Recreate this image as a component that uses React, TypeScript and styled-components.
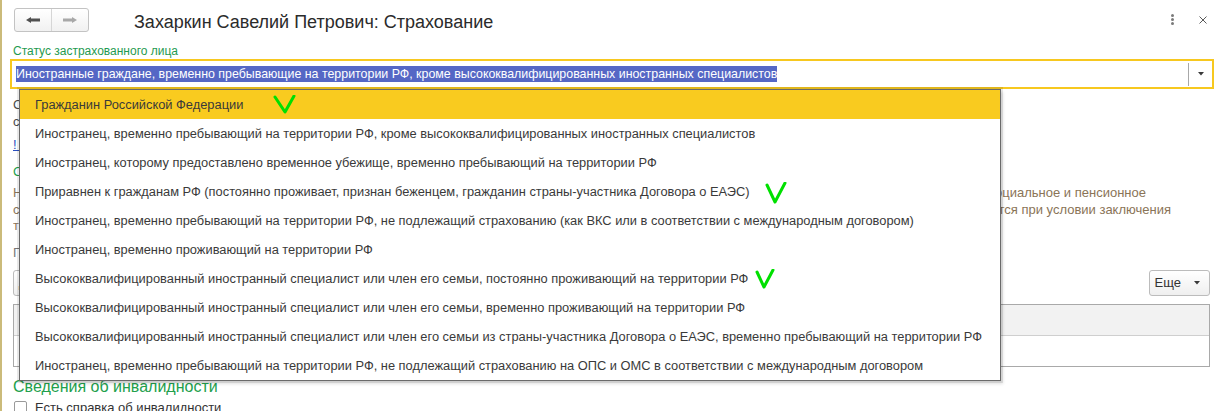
import React from 'react';
import styled, { createGlobalStyle } from 'styled-components';

const GlobalStyle = createGlobalStyle`
    html, body {
        margin: 0;
        padding: 0;
        background: #ffffff;
    }
    body {
        font-family: "Liberation Sans", Arial, sans-serif;
        font-size: 13px;
        color: #333333;
    }
`;

const Window = styled.div`
    position: relative;
    width: 1218px;
    height: 411px;
    overflow: hidden;
    box-sizing: border-box;
    border-left: 2px solid #cbbb7a;
    padding: 0 4px 0 8px;
`;

const Header = styled.div`
    display: flex;
    align-items: flex-start;
    height: 44px;
    padding-top: 8px;
    box-sizing: border-box;
`;

const NavGroup = styled.div`
    display: flex;
    margin-left: 4px;
    height: 24px;
    border: 1px solid #c3c3c3;
    border-radius: 3px;
    box-sizing: border-box;
    background: linear-gradient(#ffffff, #f1f1f1);
`;

const NavButton = styled.div<{ $first?: boolean }>`
    width: 36px;
    display: flex;
    align-items: center;
    justify-content: center;
    border-left: ${p => (p.$first ? 'none' : '1px solid #d6d6d6')};
`;

const Title = styled.div`
    margin-left: 45px;
    padding-top: 2px;
    font-size: 18px;
    line-height: 24px;
    color: #2b2b2b;
    flex: 1;
`;

const Kebab = styled.div`
    display: flex;
    flex-direction: column;
    gap: 1px;
    margin-top: 6px;
    span {
        width: 3px;
        height: 3px;
        border-radius: 50%;
        background: #7a7a7a;
    }
`;

const CloseBtn = styled.div`
    margin: 8px 7px 0 25px;
    display: flex;
`;

const FieldLabel = styled.div`
    margin-left: 3px;
    font-size: 12px;
    line-height: 15px;
    color: #1f9a50;
`;

const Field = styled.div`
    position: relative;
    height: 30px;
    border: 2px solid #f7c81f;
    box-sizing: border-box;
    display: flex;
    align-items: center;
    padding-left: 4px;
`;

const Selected = styled.span`
    background: #5567c5;
    color: #ffffff;
    font-size: 12.4px;
    line-height: 16px;
    white-space: nowrap;
`;

const FieldButton = styled.div`
    margin-left: auto;
    width: 23px;
    height: 23px;
    border-left: 1px solid #a8a8a8;
    display: flex;
    align-items: center;
    justify-content: center;
`;

const DropList = styled.div`
    position: absolute;
    left: 7px;
    top: 28px;
    z-index: 5;
    width: 982px;
    background: #ffffff;
    border: 1px solid #6a6a6a;
    box-sizing: border-box;
    box-shadow: 0 0 0 2px rgba(0, 0, 0, 0.09), 2px 3px 3px rgba(0, 0, 0, 0.12);
`;

const DropItem = styled.div<{ $active?: boolean }>`
    height: 29px;
    display: flex;
    align-items: center;
    padding-left: 15px;
    font-size: 12.85px;
    white-space: nowrap;
    color: #3a3a3a;
    background: ${p => (p.$active ? '#f9cb1f' : 'transparent')};
`;

const Mark = styled.svg<{ $gap: number; $shift: number }>`
    margin-left: ${p => p.$gap}px;
    margin-top: ${p => p.$shift}px;
    flex-shrink: 0;
`;

const Body = styled.div`
    padding-left: 3px;
    padding-top: 7px;
`;

const Note = styled.div`
    line-height: 17px;
    color: #4a4a4a;
    white-space: nowrap;
`;

const HelpLink = styled.a`
    display: inline-block;
    margin-top: 6px;
    line-height: 17px;
    color: #2a4fbf;
    text-decoration: underline;
`;

const Group = styled.div<{ $size: number }>`
    margin-top: 10px;
    font-size: ${p => p.$size}px;
    line-height: ${p => p.$size + 4}px;
    color: #22a04c;
    white-space: nowrap;
`;

const Explain = styled.div`
    margin-top: 5px;
    line-height: 16.5px;
    color: #8a7457;
`;

const ExplainLine = styled.div<{ $width: number }>`
    display: flex;
    width: ${p => p.$width}px;
    white-space: nowrap;
    span:first-child {
        flex: 1;
        min-width: 0;
        overflow: hidden;
    }
    span:last-child {
        flex-shrink: 0;
    }
`;

const PeriodLabel = styled.div`
    margin-top: 9px;
    line-height: 17px;
    color: #777777;
`;

const CommandBar = styled.div`
    margin-top: 9px;
    display: flex;
    justify-content: space-between;
    padding-right: 4px;
`;

const Button = styled.div`
    height: 26px;
    display: flex;
    align-items: center;
    gap: 13px;
    padding: 0 9px 0 5px;
    border: 1px solid #bcbcbc;
    border-radius: 3px;
    box-sizing: border-box;
    background: linear-gradient(#ffffff, #efefef);
    color: #333333;
`;

const Table = styled.div`
    margin: 8px 4px 0 0;
    border: 1px solid #a9a9a9;
`;

const TableHead = styled.div`
    height: 30px;
    background: #f2f2f2;
    border-bottom: 1px solid #cfcfcf;
`;

const TableRow = styled.div`
    height: 30px;
`;

const CheckRow = styled.label`
    margin-top: 2px;
    display: flex;
    align-items: center;
    gap: 8px;
    line-height: 17px;
    color: #333333;
`;

const Box = styled.span`
    width: 13px;
    height: 13px;
    margin-left: 1px;
    border: 1px solid #9a9a9a;
    border-radius: 2px;
    box-sizing: border-box;
    background: #ffffff;
`;

const Arrow: React.FC<{ dir: 'left' | 'right'; color: string }> = ({ dir, color }) => (
    <svg width="14" height="6" viewBox="0 0 14 6" style={{ transform: dir === 'right' ? 'scaleX(-1)' : undefined }}>
        <path d="M0 3 L5 0 L5 1.5 L14 1.5 L14 4.5 L5 4.5 L5 6 Z" fill={color} />
    </svg>
);

const Caret = () => (
    <svg width="6" height="4" viewBox="0 0 6 4">
        <path d="M0 0 L6 0 L3 3.5 Z" fill="#3a3a3a" />
    </svg>
);

const options = [
    'Гражданин Российской Федерации',
    'Иностранец, временно пребывающий на территории РФ, кроме высококвалифицированных иностранных специалистов',
    'Иностранец, которому предоставлено временное убежище, временно пребывающий на территории РФ',
    'Приравнен к гражданам РФ (постоянно проживает, признан беженцем, гражданин страны-участника Договора о ЕАЭС)',
    'Иностранец, временно пребывающий на территории РФ, не подлежащий страхованию (как ВКС или в соответствии с международным договором)',
    'Иностранец, временно проживающий на территории РФ',
    'Высококвалифицированный иностранный специалист или член его семьи, постоянно проживающий на территории РФ',
    'Высококвалифицированный иностранный специалист или член его семьи, временно проживающий на территории РФ',
    'Высококвалифицированный иностранный специалист или член его семьи из страны-участника Договора о ЕАЭС, временно пребывающий на территории РФ',
    'Иностранец, временно пребывающий на территории РФ, не подлежащий страхованию на ОПС и ОМС в соответствии с международным договором',
];

// отметки галочкой: индекс пункта -> размеры и отступ
const marks: Record<number, { w: number; h: number; d: string; gap: number; shift: number }> = {
    0: { w: 23, h: 19, d: 'M2 2 L12 17 L21 1', gap: 30, shift: 0 },
    3: { w: 22, h: 22, d: 'M2 3 L10 20 L20 1', gap: 15, shift: 2 },
    6: { w: 20, h: 20, d: 'M2 3 L9 18 L18 1', gap: 7, shift: 0 },
};

const App: React.FC = () => {
    return (
        <Window>
            <GlobalStyle />
            <Header>
                <NavGroup>
                    <NavButton $first>
                        <Arrow dir="left" color="#505050" />
                    </NavButton>
                    <NavButton>
                        <Arrow dir="right" color="#a8a8a8" />
                    </NavButton>
                </NavGroup>
                <Title>Захаркин Савелий Петрович: Страхование</Title>
                <Kebab>
                    <span />
                    <span />
                    <span />
                </Kebab>
                <CloseBtn>
                    <svg width="8" height="8" viewBox="0 0 8 8">
                        <path d="M0.5 0.5 L7.5 7.5 M7.5 0.5 L0.5 7.5" stroke="#5a5a5a" strokeWidth="1" />
                    </svg>
                </CloseBtn>
            </Header>

            <FieldLabel>Статус застрахованного лица</FieldLabel>
            <Field>
                <Selected>
                    Иностранные граждане, временно пребывающие на территории РФ, кроме высококвалифицированных иностранных специалистов
                </Selected>
                <FieldButton>
                    <Caret />
                </FieldButton>
                <DropList>
                    {options.map((text, i) => {
                        const m = marks[i];
                        return (
                            <DropItem key={i} $active={i === 0}>
                                {text}
                                {m && (
                                    <Mark $gap={m.gap} $shift={m.shift} width={m.w} height={m.h} viewBox={`0 0 ${m.w} ${m.h}`}>
                                        <path d={m.d} fill="none" stroke="#00e000" strokeWidth="3" strokeLinecap="round" strokeLinejoin="round" />
                                    </Mark>
                                )}
                            </DropItem>
                        );
                    })}
                </DropList>
            </Field>

            <Body>
                <Note>Статус определяет тарифы страховых взносов, применяемые к выплатам сотрудника,</Note>
                <Note>с учетом периода действия статуса.</Note>
                <HelpLink href="#no_div">! Как определить статус застрахованного лица</HelpLink>
                <Group $size={13}>Страхование иностранных граждан</Group>
                <Explain>
                    <ExplainLine $width={1133}>
                        <span>На иностранных граждан, временно пребывающих на территории РФ, распространяется обязательное медицинское, </span>
                        <span>социальное и пенсионное</span>
                    </ExplainLine>
                    <ExplainLine $width={1158}>
                        <span>страхование в общем порядке. Для отдельных категорий иностранцев страхование осуществля</span>
                        <span>ется при условии заключения</span>
                    </ExplainLine>
                    <ExplainLine $width={600}>
                        <span>трудового договора на срок не менее шести месяцев.</span>
                        <span />
                    </ExplainLine>
                </Explain>
                <PeriodLabel>Периоды действия статуса</PeriodLabel>
                <CommandBar>
                    <Button>Добавить</Button>
                    <Button>
                        Еще
                        <Caret />
                    </Button>
                </CommandBar>
                <Table>
                    <TableHead />
                    <TableRow />
                </Table>
                <Group $size={16}>Сведения об инвалидности</Group>
                <CheckRow>
                    <Box />
                    Есть справка об инвалидности
                </CheckRow>
            </Body>
        </Window>
    );
};

export default App;
